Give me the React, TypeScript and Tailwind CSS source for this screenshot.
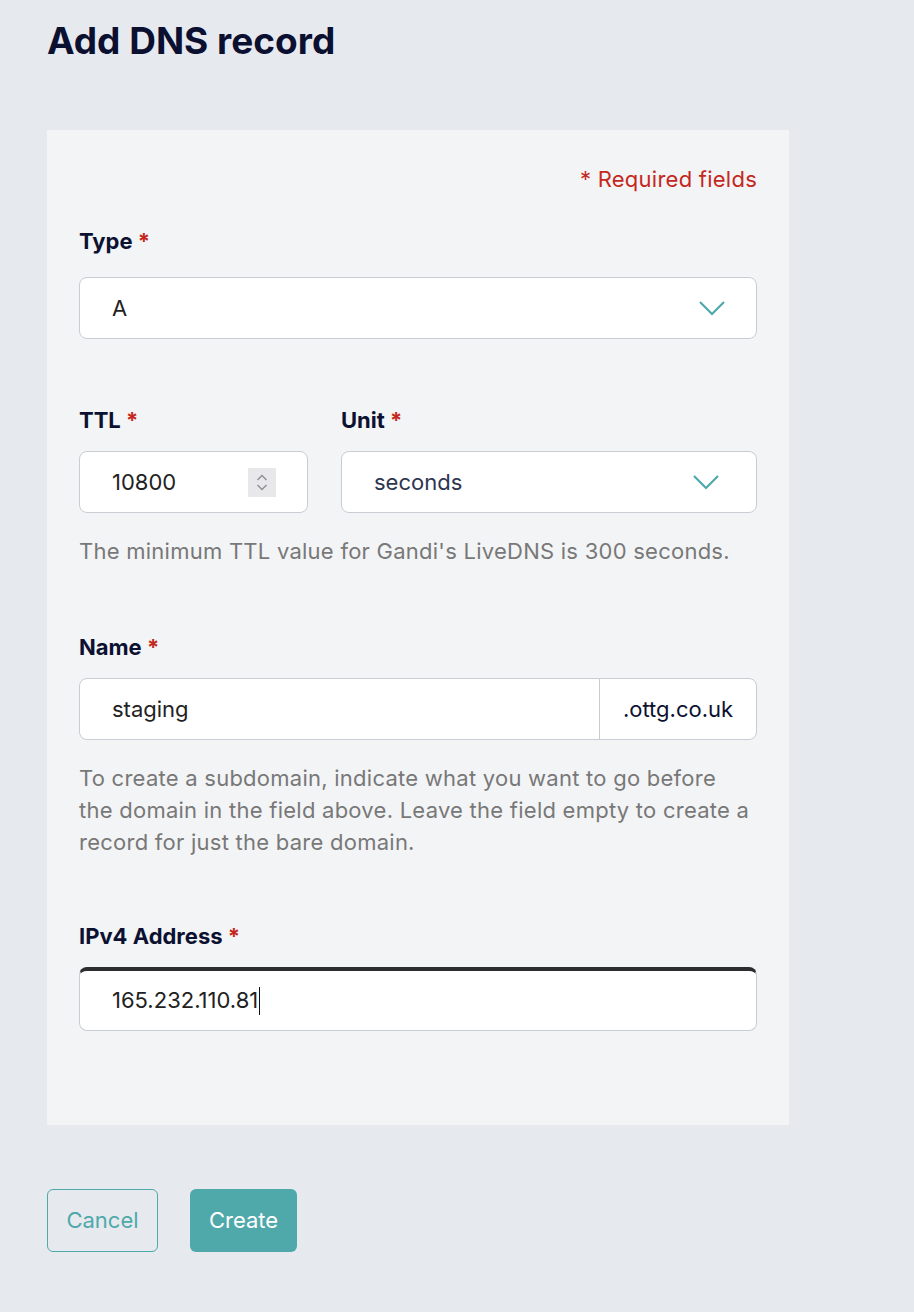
import React from "react";

const Chevron: React.FC = () => (
  <svg width="28" height="16" viewBox="0 0 28 16" fill="none">
    <path d="M2 2 L14 14 L26 2" stroke="#4fa9aa" strokeWidth="2.2" />
  </svg>
);

const Label: React.FC<{ text: string }> = ({ text }) => (
  <div className="text-[22px] leading-[28px] font-bold text-[#0c1131]">
    {text} <span className="text-[#c4281c]">*</span>
  </div>
);

const Hint: React.FC<{ children: React.ReactNode }> = ({ children }) => (
  <p className="mt-[22px] text-[22px] leading-[32px] tracking-[0.25px] text-[#787878]">{children}</p>
);

const box = "h-[62px] bg-white border border-[#c9ccd3] rounded-[8px] flex items-center";

const App: React.FC = () => {
  return (
    <div
      className="min-h-screen bg-[#e6e9ed] pl-[47px] pt-[19px] pb-[60px]"
      style={{ fontFamily: "Inter, 'Noto Sans', sans-serif" }}
    >
      <h1 className="text-[37px] leading-[44px] font-bold text-[#0b1031]">Add DNS record</h1>

      <div className="mt-[67px] w-[742px] bg-[#f3f4f6] px-8 pt-[35px] pb-[94px]">
        <div className="text-right text-[22px] leading-[28px] tracking-[0.25px] text-[#c4281c]">
          * Required fields
        </div>

        {/* Type */}
        <div className="mt-[34px]">
          <Label text="Type" />
          <div className={`${box} mt-[22px] px-8 justify-between`}>
            <span className="text-[22px] text-[#222]">A</span>
            <span className="mr-[-2px]">
              <Chevron />
            </span>
          </div>
        </div>

        {/* TTL + Unit */}
        <div className="mt-[67px] flex gap-[33px]">
          <div className="w-[229px]">
            <Label text="TTL" />
            <div className={`${box} mt-[17px] pl-8 pr-[31px] justify-between`}>
              <span className="text-[22px] text-[#222]">10800</span>
              <span className="w-[28px] h-[29px] bg-[#e8e8eb] flex flex-col items-center justify-center gap-[3px]">
                <svg width="12" height="7" viewBox="0 0 12 7" fill="none">
                  <path d="M1.5 6 L6 1.5 L10.5 6" stroke="#8e8e93" strokeWidth="1.4" />
                </svg>
                <svg width="12" height="7" viewBox="0 0 12 7" fill="none">
                  <path d="M1.5 1 L6 5.5 L10.5 1" stroke="#8e8e93" strokeWidth="1.4" />
                </svg>
              </span>
            </div>
          </div>
          <div className="flex-1">
            <Label text="Unit" />
            <div className={`${box} mt-[17px] pl-8 pr-[36px] justify-between`}>
              <span className="text-[22px] text-[#2d3650]">seconds</span>
              <Chevron />
            </div>
          </div>
        </div>
        <Hint>The minimum TTL value for Gandi's LiveDNS is 300 seconds.</Hint>

        {/* Name */}
        <div className="mt-[66px]">
          <Label text="Name" />
          <div className={`${box} mt-[17px] overflow-hidden`}>
            <span className="flex-1 pl-8 text-[22px] text-[#222]">staging</span>
            <span className="h-full w-[157px] border-l border-[#c9ccd3] flex items-center justify-center text-[22px] text-[#0c1131]">
              .ottg.co.uk
            </span>
          </div>
        </div>
        <Hint>
          To create a subdomain, indicate what you want to go before
          <br />
          the domain in the field above. Leave the field empty to create a record for just the bare
          domain.
        </Hint>

        {/* IPv4 */}
        <div className="mt-[64px]">
          <Label text="IPv4 Address" />
          <div className="h-[64px] mt-[17px] bg-white border border-[#c9ccd3] border-t-[4px] border-t-[#2c2c2e] rounded-[8px] flex items-center pl-8">
            <span className="text-[22px] text-[#222]">165.232.110.81</span>
            <span className="w-px h-[28px] bg-[#111] ml-[1px]" />
          </div>
        </div>
      </div>

      <div className="mt-[64px] flex gap-[32px]">
        <button className="h-[63px] w-[111px] rounded-[6px] border border-[#4fa9aa] text-[#4fa9aa] text-[22px]">
          Cancel
        </button>
        <button className="h-[63px] w-[107px] rounded-[6px] bg-[#4fa9aa] text-white text-[22px]">
          Create
        </button>
      </div>
    </div>
  );
};

export default App;
